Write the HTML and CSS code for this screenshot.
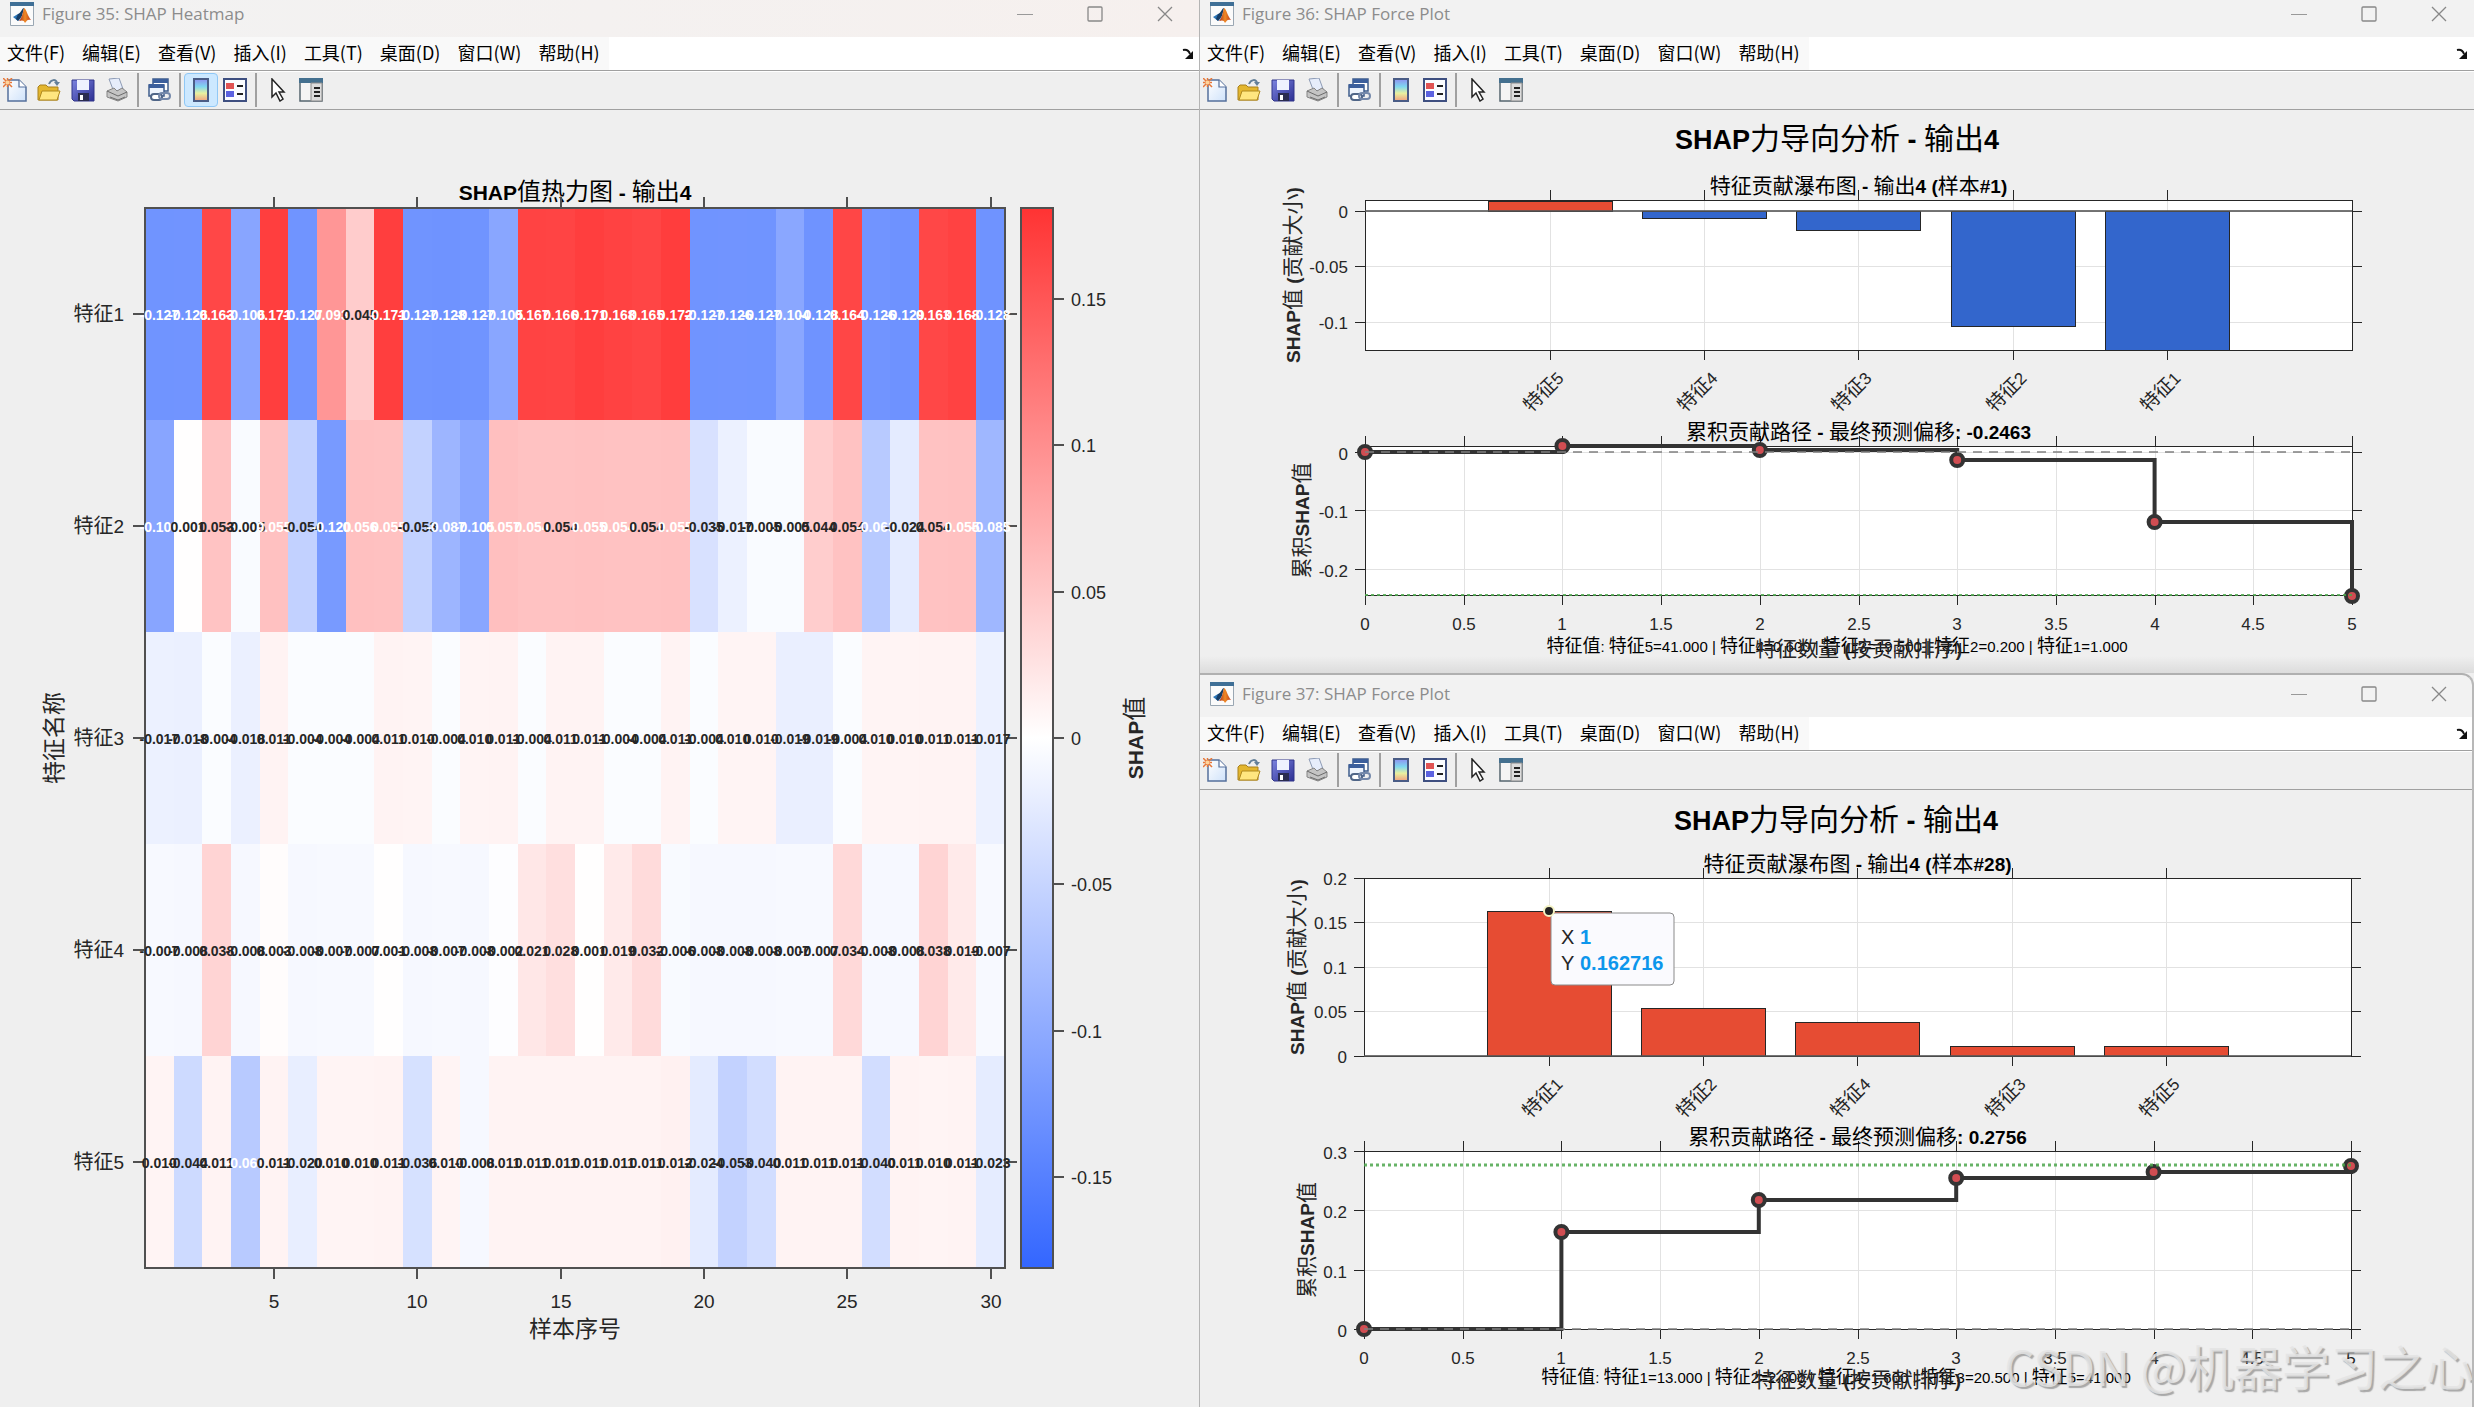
FILE: index.html
```html
<!DOCTYPE html>
<html lang="zh-CN">
<head>
<meta charset="utf-8">
<title>SHAP Figures</title>
<link rel="stylesheet" href="styles.css">
</head>
<body>
<svg class="sprite" aria-hidden="true">
  <defs>
    <linearGradient id="g-bar" x1="0" y1="0" x2="0" y2="1"><stop offset="0" stop-color="#8f8ff0"/><stop offset=".35" stop-color="#7fd8f0"/><stop offset=".65" stop-color="#e8f0a0"/><stop offset="1" stop-color="#f0a080"/></linearGradient>
    <linearGradient id="g-page" x1="0" y1="0" x2="1" y2="1"><stop offset="0" stop-color="#fff"/><stop offset="1" stop-color="#cfe2fa"/></linearGradient>
    <linearGradient id="g-save" x1="0" y1="0" x2="1" y2="1"><stop offset="0" stop-color="#7c84e0"/><stop offset="1" stop-color="#2c2f92"/></linearGradient>
    <linearGradient id="g-flame" x1="0" y1="0" x2="1" y2="0"><stop offset="0" stop-color="#a5281b"/><stop offset=".5" stop-color="#f08a24"/><stop offset="1" stop-color="#c23a1c"/></linearGradient>
  </defs>
  <symbol id="i-matlab" viewBox="0 0 24 24"><path d="M.5 .5h23v23H.5z" fill="#fbfbfb" stroke="#9aa7b3"/><path d="M0 0h24v4H0z" fill="#3f6f96"/><path d="M3 15l5-3 3 4-3 3z" fill="#2a76b8"/><path d="M8 12c3-1 4-6 6-6l-2 8-4 5-2-2z" fill="#163d66"/><path d="M14 6c2 0 4 9 7 12-3-1-4 0-6 3-1-3-3-3-6-2 3-3 4-9 5-13z" fill="url(#g-flame)"/></symbol>
  <symbol id="i-new" viewBox="0 0 24 24"><path d="M5 2h11l7 7v14H5z" fill="url(#g-page)" stroke="#56709c" stroke-width="1.5"/><path d="M16 2v7h7" fill="#fff" stroke="#56709c" stroke-width="1.2"/><path d="M0 0l9 9M9 0L0 9M4.500 0v9M0 4.500h9" stroke="#e87838" stroke-width="1.5"/><circle cx="4.500" cy="4.500" r="2" fill="#ffd39a"/></symbol>
  <symbol id="i-open" viewBox="0 0 24 24"><path d="M1 22V9l2-2h6l2 2h10v13z" fill="#e3b62e" stroke="#a9801c"/><path d="M2 22l3-9h18l-3 9z" fill="#ffe680" stroke="#b08a20"/><path d="M12 6c2-5 7-5 8-1" fill="none" stroke="#64809a" stroke-width="2"/><path d="M17 4h6l-3 4z" fill="#64809a"/></symbol>
  <symbol id="i-save" viewBox="0 0 24 24"><path d="M1 2h22v21H3l-2-2z" fill="url(#g-save)" stroke="#31348a"/><path d="M6 2h12v10H6z" fill="#eef2ff"/><path d="M7 15h11v8H7z" fill="#2a2c50"/><path d="M9 17h3v5H9z" fill="#fff"/></symbol>
  <symbol id="i-print" viewBox="0 0 24 24"><path d="M4 1l10-1 4 11-9 3z" fill="#e6edfb" stroke="#8d9bb5"/><path d="M2 13l7-3 3 3 5-3 5 4v5l-9 4-11-4z" fill="#c4c4c4" stroke="#858585"/><path d="M2 13l11 5 9-4M5 19l8 3 7-3" fill="none" stroke="#6c6c6c"/></symbol>
  <symbol id="i-link" viewBox="0 0 24 24"><path d="M6 1h15v12H6z" fill="#fff" stroke="#3f5d8c" stroke-width="1.500"/><path d="M6 1h15v4H6z" fill="#3c5f9c"/><path d="M2 7h15v11H2z" fill="#edf3fc" stroke="#3f5d8c" stroke-width="1.500"/><path d="M2 6h15v4H2z" fill="#3c5f9c"/><rect x="4" y="16" width="11" height="6" rx="3" fill="#fff" stroke="#4f6587" stroke-width="2"/><rect x="12" y="15" width="11" height="6" rx="3" fill="none" stroke="#7488aa" stroke-width="2"/></symbol>
  <symbol id="i-colorbar" viewBox="0 0 24 24"><path d="M5 1h14v22H5z" fill="url(#g-bar)" stroke="#4a5c86" stroke-width="2"/></symbol>
  <symbol id="i-legend" viewBox="0 0 24 24"><path d="M1 1h22v22H1z" fill="#fafcff" stroke="#3e4f80" stroke-width="2"/><path d="M3 5h8v6H3z" fill="#e05454"/><path d="M3 13h8v6H3z" fill="#5b62e0"/><path d="M14 8h6M14 16h6" stroke="#222" stroke-width="2"/></symbol>
  <symbol id="i-cursor" viewBox="0 0 24 24"><path d="M7 1v18l4-4 4 8 3-2-4-7h5z" fill="#fff" stroke="#222" stroke-width="1.500"/></symbol>
  <symbol id="i-inspect" viewBox="0 0 24 24"><path d="M1 1h22v22H1z" fill="#f4f4f4" stroke="#56656f" stroke-width="1.500"/><path d="M0 0h24v5H0z" fill="#44708f"/><path d="M12 5h11v18H12z" fill="#dcdcdc" stroke="#8a8a8a"/><path d="M15 10h6M15 14h6M15 18h6" stroke="#222" stroke-width="2"/></symbol>
  <symbol id="i-min" viewBox="0 0 16 16"><path d="M0 8.500h16" stroke="#999"/></symbol>
  <symbol id="i-max" viewBox="0 0 16 16"><rect x="1" y="1" width="14" height="14" rx="1" fill="none" stroke="#888" stroke-width="1.300"/></symbol>
  <symbol id="i-close" viewBox="0 0 16 16"><path d="M1 1l14 14M15 1L1 15" stroke="#888" stroke-width="1.300"/></symbol>
  <symbol id="i-dock" viewBox="0 0 12 12"><path d="M1 2c4-1 6 1 7 4" fill="none" stroke="#111" stroke-width="2"/><path d="M11 3v8H3z" fill="#111"/></symbol>
</svg>

<main class="desktop">
  <section class="window window--heatmap" aria-label="Figure 35">
    <header class="titlebar titlebar--warm">
      <svg class="icon"><use href="#i-matlab"/></svg>
      <h1 class="titlebar__text">Figure 35: SHAP Heatmap</h1>
      <div class="controls">
        <button type="button" aria-label="最小化"><svg><use href="#i-min"/></svg></button>
        <button type="button" aria-label="最大化"><svg><use href="#i-max"/></svg></button>
        <button type="button" aria-label="关闭"><svg><use href="#i-close"/></svg></button>
      </div>
    </header>
    <nav class="menubar">
      <div class="menubar__items"><button type="button">文件(F)</button><button type="button">编辑(E)</button><button type="button">查看(V)</button><button type="button">插入(I)</button><button type="button">工具(T)</button><button type="button">桌面(D)</button><button type="button">窗口(W)</button><button type="button">帮助(H)</button></div>
      <button class="dock" type="button" aria-label="停靠"><svg><use href="#i-dock"/></svg></button>
    </nav>
    <div class="toolbar" role="toolbar">
      <div class="group"><button type="button" aria-label="新建"><svg class="icon"><use href="#i-new"/></svg></button><button type="button" aria-label="打开"><svg class="icon"><use href="#i-open"/></svg></button><button type="button" aria-label="保存"><svg class="icon"><use href="#i-save"/></svg></button><button type="button" aria-label="打印"><svg class="icon"><use href="#i-print"/></svg></button></div>
      <div class="group"><button type="button" aria-label="链接"><svg class="icon"><use href="#i-link"/></svg></button></div>
      <div class="group"><button class="is-on" type="button" aria-label="颜色栏" aria-pressed="true"><svg class="icon"><use href="#i-colorbar"/></svg></button><button type="button" aria-label="图例"><svg class="icon"><use href="#i-legend"/></svg></button></div>
      <div class="group group--last"><button type="button" aria-label="编辑绘图"><svg class="icon"><use href="#i-cursor"/></svg></button><button type="button" aria-label="属性"><svg class="icon"><use href="#i-inspect"/></svg></button></div>
    </div>
    <svg class="plot" id="heatmap" viewBox="0 110 1200 1297" role="img" aria-label="SHAP值热力图"></svg>
  </section>

  <div class="column">
    <section class="window" aria-label="Figure 36">
      <header class="titlebar">
        <svg class="icon"><use href="#i-matlab"/></svg>
        <h1 class="titlebar__text">Figure 36: SHAP Force Plot</h1>
        <div class="controls">
          <button type="button" aria-label="最小化"><svg><use href="#i-min"/></svg></button>
          <button type="button" aria-label="最大化"><svg><use href="#i-max"/></svg></button>
          <button type="button" aria-label="关闭"><svg><use href="#i-close"/></svg></button>
        </div>
      </header>
      <nav class="menubar">
        <div class="menubar__items"><button type="button">文件(F)</button><button type="button">编辑(E)</button><button type="button">查看(V)</button><button type="button">插入(I)</button><button type="button">工具(T)</button><button type="button">桌面(D)</button><button type="button">窗口(W)</button><button type="button">帮助(H)</button></div>
        <button class="dock" type="button" aria-label="停靠"><svg><use href="#i-dock"/></svg></button>
      </nav>
      <div class="toolbar" role="toolbar">
        <div class="group"><button type="button" aria-label="新建"><svg class="icon"><use href="#i-new"/></svg></button><button type="button" aria-label="打开"><svg class="icon"><use href="#i-open"/></svg></button><button type="button" aria-label="保存"><svg class="icon"><use href="#i-save"/></svg></button><button type="button" aria-label="打印"><svg class="icon"><use href="#i-print"/></svg></button></div>
        <div class="group"><button type="button" aria-label="链接"><svg class="icon"><use href="#i-link"/></svg></button></div>
        <div class="group"><button type="button" aria-label="颜色栏"><svg class="icon"><use href="#i-colorbar"/></svg></button><button type="button" aria-label="图例"><svg class="icon"><use href="#i-legend"/></svg></button></div>
        <div class="group group--last"><button type="button" aria-label="编辑绘图"><svg class="icon"><use href="#i-cursor"/></svg></button><button type="button" aria-label="属性"><svg class="icon"><use href="#i-inspect"/></svg></button></div>
      </div>
      <svg class="plot plot--shaded" id="force36" viewBox="1200 110 1274 563" role="img" aria-label="SHAP力导向分析 样本1"></svg>
    </section>

    <section class="window window--front" aria-label="Figure 37">
      <header class="titlebar titlebar--tall">
        <svg class="icon"><use href="#i-matlab"/></svg>
        <h1 class="titlebar__text">Figure 37: SHAP Force Plot</h1>
        <div class="controls">
          <button type="button" aria-label="最小化"><svg><use href="#i-min"/></svg></button>
          <button type="button" aria-label="最大化"><svg><use href="#i-max"/></svg></button>
          <button type="button" aria-label="关闭"><svg><use href="#i-close"/></svg></button>
        </div>
      </header>
      <nav class="menubar">
        <div class="menubar__items"><button type="button">文件(F)</button><button type="button">编辑(E)</button><button type="button">查看(V)</button><button type="button">插入(I)</button><button type="button">工具(T)</button><button type="button">桌面(D)</button><button type="button">窗口(W)</button><button type="button">帮助(H)</button></div>
        <button class="dock" type="button" aria-label="停靠"><svg><use href="#i-dock"/></svg></button>
      </nav>
      <div class="toolbar" role="toolbar">
        <div class="group"><button type="button" aria-label="新建"><svg class="icon"><use href="#i-new"/></svg></button><button type="button" aria-label="打开"><svg class="icon"><use href="#i-open"/></svg></button><button type="button" aria-label="保存"><svg class="icon"><use href="#i-save"/></svg></button><button type="button" aria-label="打印"><svg class="icon"><use href="#i-print"/></svg></button></div>
        <div class="group"><button type="button" aria-label="链接"><svg class="icon"><use href="#i-link"/></svg></button></div>
        <div class="group"><button type="button" aria-label="颜色栏"><svg class="icon"><use href="#i-colorbar"/></svg></button><button type="button" aria-label="图例"><svg class="icon"><use href="#i-legend"/></svg></button></div>
        <div class="group group--last"><button type="button" aria-label="编辑绘图"><svg class="icon"><use href="#i-cursor"/></svg></button><button type="button" aria-label="属性"><svg class="icon"><use href="#i-inspect"/></svg></button></div>
      </div>
      <svg class="plot" id="force37" viewBox="1200 790 1274 617" role="img" aria-label="SHAP力导向分析 样本28"></svg>
      <p class="watermark">CSDN @机器学习之心</p>
    </section>
  </div>
</main>
<script src="plots.js"></script>
</body>
</html>
```

FILE: styles.css
```css
* { box-sizing: border-box; }

body {
  margin: 0;
  background: #efefef;
  color: #000;
  font-family: "Noto Sans CJK SC", "Noto Sans", sans-serif;
  font-size: 18px;
}

button {
  border: 0;
  padding: 0;
  background: none;
  font: inherit;
  color: inherit;
}

.sprite { position: absolute; width: 0; height: 0; }

.desktop {
  display: grid;
  grid-template-columns: 1200fr 1274fr;
  overflow: hidden;
}

.column { display: flex; flex-direction: column; min-width: 0; }

.window { position: relative; min-width: 0; background: #efefef; }

/* Window edges lie over the content so that they take no room from the plot */
.window--heatmap::after,
.window--front::after {
  content: "";
  position: absolute;
  inset: 0;
  border-right: 1px solid #b4b4b4;
  pointer-events: none;
}
.window--front { padding-top: 2px; border-radius: 0 12px 0 0; }
.window--front::after {
  border-top: 2px solid #b0b0b0;
  border-right: 2px solid #b8b8b8;
  border-radius: 0 12px 0 0;
}

/* Title bar */
.titlebar {
  display: flex;
  align-items: center;
  height: 37px;
  padding: 0 27px 9px 10px;
  background: #f2f2f2;
}
.titlebar--warm { background: linear-gradient(90deg, #f2f2f2, #f6f0ee); }
.titlebar--tall { height: 42px; padding-bottom: 4px; border-radius: 0 12px 0 0; }
.titlebar__text {
  flex: 1;
  margin: 0 0 0 8px;
  color: #8c8c8c;
  font: 400 17px/24px "Open Sans", "Noto Sans", sans-serif;
}
.controls { display: flex; gap: 54px; }
.controls button { display: flex; }
.controls svg { width: 16px; height: 16px; }
.icon { display: block; width: 24px; height: 24px; }

/* Menu bar */
.menubar {
  display: flex;
  align-items: center;
  justify-content: space-between;
  height: 33px;
  padding-right: 6px;
  background: #fff;
}
.menubar__items {
  display: flex;
  align-items: flex-start;
  gap: 17px;
  height: 33px;
  padding: 0 9px 0 7px;
  background: #f9f9f9;
  line-height: 31px;
}
.dock svg { display: block; width: 12px; height: 12px; }

/* Tool bar */
.toolbar {
  display: flex;
  align-items: center;
  height: 40px;
  border-top: 1px solid #a0a0a0;
  border-bottom: 1px solid #a0a0a0;
  box-shadow: inset 0 1px #fff;
}
.group {
  display: flex;
  align-items: center;
  height: 34px;
  padding: 0 3px;
  border-right: 2px solid #a0a0a0;
}
.group:first-child { padding-left: 0; }
.group--last { border-right: 0; }
.toolbar button { padding: 4px; border: 1px solid transparent; border-radius: 4px; }
.group:first-child button:first-child { padding-left: 2px; }
.toolbar .is-on { border-color: #90c8f6; background: #cce8ff; }

/* Plots */
.plot {
  display: block;
  width: 100%;
  height: auto;
  overflow: hidden;
  font-family: "Liberation Sans", "Noto Sans CJK SC", sans-serif;
}
.plot--shaded { background: linear-gradient(#efefef 97%, #dcdcdc); }
.plot text { fill: #262626; }
.han { font-family: "Noto Sans CJK SC", sans-serif; font-weight: 400; }

.t-cell { font-size: 14px; font-weight: 700; }
.plot .t-cell--light { fill: #fff; }
.t-note { font-size: 15px; }
.t-note .han { font-size: 18px; }
.t-tick { font-size: 17px; }
.t-tick .han { font-size: 19px; }
.t-bar { font-size: 18px; }
.t-axis { font-size: 19px; }
.t-axis .han { font-size: 20px; }
.t-name .han { font-size: 23px; }
.t-label { font-size: 19px; font-weight: 700; }
.t-label .han { font-size: 21px; }
.t-heading { font-size: 21px; font-weight: 700; }
.t-heading .han { font-size: 24px; }
.t-title { font-size: 27px; font-weight: 700; }
.t-title .han { font-size: 30px; }
.plot .t-black { fill: #000; }

.area { fill: #fff; }
.frame { fill: none; stroke: #262626; stroke-width: 1; shape-rendering: crispEdges; }
.tick { stroke: #262626; stroke-width: 1; shape-rendering: crispEdges; }
.heavy .frame, .heavy .tick { stroke: #505050; stroke-width: 2; }
.grid { stroke: #e2e2e2; shape-rendering: crispEdges; }
.cells { shape-rendering: crispEdges; }
.bar { stroke: #262626; stroke-width: 1; shape-rendering: crispEdges; }
.bar--pos { fill: #e64c33; }
.bar--neg { fill: #3366cc; }
.zero { stroke: #555; stroke-width: 2; opacity: .8; shape-rendering: crispEdges; }
.step { fill: none; stroke: #333; stroke-width: 4; }
.dash { stroke: #808080; stroke-width: 2; stroke-dasharray: 9 7; opacity: .75; }
.final { stroke: #4da64d; stroke-width: 3; stroke-dasharray: 3 3; opacity: .85; }
.final--thin { stroke-width: 2; }
.dot { fill: #d14d52; stroke: #333; stroke-width: 4; }

.tip { fill: #fafafe; stroke: #8a8a8a; stroke-width: 1; }
.tip-dot { fill: #222; stroke: #f4f3c4; stroke-width: 2; }
.t-tip { font-size: 20px; }
.plot .t-tip--value { fill: #0d96ec; font-weight: 700; }

.watermark {
  position: absolute;
  right: 0;
  bottom: 14px;
  margin: 0;
  color: rgba(228, 228, 228, .85);
  font-size: 48px;
  line-height: 56px;
  text-shadow: 2px 2px 1px rgba(120, 120, 120, .6);
  white-space: nowrap;
}
```

FILE: plots.js
```javascript
const NS = "http://www.w3.org/2000/svg";

function add(parent, tag, attrs) {
  const node = document.createElementNS(NS, tag);
  for (const key in attrs) node.setAttribute(key, attrs[key]);
  parent.appendChild(node);
  return node;
}

function line(parent, cls, x1, y1, x2, y2) {
  add(parent, "line", { class: cls, x1, y1, x2, y2 });
}

function box(parent, cls, x, y, x2, y2) {
  add(parent, "rect", { class: cls, x, y, width: x2 - x, height: y2 - y });
}

// Chinese runs get their own span so they can use a separate font and size.
function text(parent, cls, x, y, value, anchor = "middle", angle = 0) {
  const node = add(parent, "text", { class: cls, x, y, "text-anchor": anchor });
  if (angle) node.setAttribute("transform", `rotate(${angle} ${x} ${y})`);
  for (const run of value.match(/[\u4e00-\u9fff]+|[^\u4e00-\u9fff]+/g)) {
    if (/[\u4e00-\u9fff]/.test(run)) add(node, "tspan", { class: "han" }).textContent = run;
    else node.appendChild(document.createTextNode(run));
  }
}

/* ---------- Heatmap ---------- */

const shap = [
  [-.127, -.126, .163, -.106, .171, -.127, .093, .045, .171, -.127, -.128, -.127, -.105, .167, .166, .171, .168, .165, .172, -.127, -.126, -.127, -.104, -.128, .164, -.126, -.129, .163, .168, -.128],
  [-.106, .001, .053, -.005, .055, -.054, -.120, .056, .055, -.053, -.087, -.105, .057, .0544, .054, .055, .0544, .054, .055, -.035, -.017, -.005, -.005, .044, .054, -.063, -.024, .054, .055, -.085],
  [-.017, -.018, -.004, -.018, .011, -.004, -.004, -.004, .011, .010, -.004, .010, .011, -.004, .011, .011, -.004, -.004, .011, -.004, .010, .010, -.019, -.019, -.004, .010, .010, .011, .011, -.017],
  [-.007, -.008, .038, -.008, .003, -.008, -.007, -.007, .001, -.008, -.007, -.008, -.002, .021, .028, .001, .019, .032, -.006, -.008, -.008, -.008, -.007, -.007, .034, -.008, -.008, .038, .019, -.007],
  [.010, -.044, .011, -.063, .011, -.020, .010, .010, .011, -.036, .010, -.008, .011, .011, .011, .011, .011, .011, .012, -.024, -.053, -.040, .011, .011, .011, -.040, .011, .010, .011, -.023]
];
const LIMIT = .181;

function color(v) {
  const t = Math.min(1, Math.abs(v) / LIMIT);
  const strong = Math.round(255 - 204 * t);
  return v < 0 ? `rgb(${strong},${Math.round(255 - 153 * t)},255)` : `rgb(255,${strong},${strong})`;
}

function drawHeatmap(root) {
  const svg = add(root, "g", { class: "heavy" });
  const left = 145, right = 1005, top = 208, bottom = 1268;
  const cw = (right - left) / 30, rh = (bottom - top) / 5;
  const cells = add(svg, "g", { class: "cells" });
  shap.forEach((row, r) => row.forEach((v, c) => {
    const x = Math.round(left + c * cw), x2 = Math.round(left + (c + 1) * cw);
    add(cells, "rect", { x, y: top + r * rh, width: x2 - x, height: rh, fill: color(v) });
  }));
  box(svg, "frame", left, top, right, bottom);
  text(svg, "t-heading t-black", 575, 200, "SHAP值热力图 - 输出4");
  for (let k = 5; k <= 30; k += 5) {
    const x = Math.round(left + (k - .5) * cw);
    line(svg, "tick", x, top - 11, x, top);
    line(svg, "tick", x, bottom, x, bottom + 11);
    text(svg, "t-axis", x, 1308, String(k));
  }
  shap.forEach((row, r) => {
    const y = top + (r + .5) * rh;
    line(svg, "tick", left - 12, y, left, y);
    line(svg, "tick", right, y, right + 12, y);
    text(svg, "t-axis", 124, y + 7, "特征" + (r + 1), "end");
    row.forEach((v, c) => {
      const light = Math.abs(v) > .0542 ? " t-cell--light" : "";
      text(svg, "t-cell" + light, left + (c + .5) * cw, y + 6, v.toFixed(3));
    });
  });
  text(svg, "t-name", 575, 1337, "样本序号");
  text(svg, "t-name", 62, 738, "特征名称", "middle", -90);

  const ramp = add(add(svg, "defs", {}), "linearGradient", { id: "ramp", x1: 0, y1: 0, x2: 0, y2: 1 });
  add(ramp, "stop", { offset: 0, "stop-color": "#ff3333" });
  add(ramp, "stop", { offset: .5, "stop-color": "#fff" });
  add(ramp, "stop", { offset: 1, "stop-color": "#3366ff" });
  add(svg, "rect", { x: 1021, y: top, width: 32, height: bottom - top, fill: "url(#ramp)" });
  box(svg, "frame", 1021, top, 1053, bottom);
  for (const v of [.15, .1, .05, 0, -.05, -.1, -.15]) {
    const y = Math.round(738 - v / LIMIT * 530);
    line(svg, "tick", 1053, y, 1064, y);
    text(svg, "t-bar", 1071, y + 7, String(v), "start");
  }
  text(svg, "t-heading", 1143, 738, "SHAP值", "middle", -90);
}

/* ---------- Force plots ---------- */

function drawForce(svg, f) {
  const { left, right } = f;
  const mid = (left + right) / 2, unit = (right - left) / 5;
  text(svg, "t-title t-black", f.title.x, f.title.y, "SHAP力导向分析 - 输出4");

  const b = f.bars;
  box(svg, "area", left, b.top, right, b.bottom);
  const centers = b.values.map((_, i) => Math.round(left + 185 + i * 154.2));
  centers.forEach(x => line(svg, "grid", x, b.top, x, b.bottom));
  b.ticks.forEach(([, y]) => line(svg, "grid", left, y, right, y));
  box(svg, "frame", left, b.top, right, b.bottom);
  b.values.forEach(([name, y], i) => {
    const x = centers[i];
    const cls = y < b.zero ? "bar bar--pos" : "bar bar--neg";
    box(svg, cls, x - 62, Math.min(y, b.zero), x + 62, Math.max(y, b.zero));
    line(svg, "tick", x, b.top - 10, x, b.top);
    line(svg, "tick", x, b.bottom, x, b.bottom + 10);
    text(svg, "t-tick", x - 2, b.bottom + 46, name, "middle", -45);
  });
  b.ticks.forEach(([label, y]) => {
    line(svg, "tick", left - 10, y, left, y);
    line(svg, "tick", right, y, right + 10, y);
    text(svg, "t-tick", left - 17, y + 7, label, "end");
  });
  line(svg, "zero", left, b.zero, right, b.zero);
  text(svg, "t-label t-black", mid, b.top - 7, b.title);
  text(svg, "t-label", b.labelX, (b.top + b.bottom) / 2, "SHAP值 (贡献大小)", "middle", -90);

  const p = f.path;
  box(svg, "area", left, p.top, right, p.bottom);
  for (let k = 0; k <= 10; k++) {
    const x = Math.round(left + k * unit / 2);
    line(svg, "grid", x, p.top, x, p.bottom);
    line(svg, "tick", x, p.top - 10, x, p.top);
    line(svg, "tick", x, p.bottom, x, p.bottom + 10);
    text(svg, "t-tick", x, p.bottom + 35, String(k / 2));
  }
  p.ticks.forEach(([label, y]) => {
    line(svg, "grid", left, y, right, y);
    line(svg, "tick", left - 10, y, left, y);
    line(svg, "tick", right, y, right + 10, y);
    text(svg, "t-tick", left - 17, y + 8, label, "end");
  });
  box(svg, "frame", left, p.top, right, p.bottom);
  let d = `M${left} ${p.points[0]}`;
  p.points.slice(1).forEach((y, i) => { d += `H${left + (i + 1) * unit}V${y}`; });
  add(svg, "path", { class: "step", d });
  p.points.forEach((y, i) => add(svg, "circle", { class: "dot", cx: left + i * unit, cy: y, r: 6 }));
  line(svg, "dash", left, p.points[0], right, p.points[0]);
  line(svg, "final" + (p.final === p.bottom ? " final--thin" : ""), left, p.final, right, p.final);
  text(svg, "t-label t-black", mid, p.top - 7, p.title);
  text(svg, "t-label", p.labelX, (p.top + p.bottom) / 2, "累积SHAP值", "middle", -90);
  text(svg, "t-note t-black", f.note.x, f.note.y, f.note.value);
  text(svg, "t-label", mid, f.note.y + 4, "特征数量 (按贡献排序)");

  if (f.tip) {
    const { x, y } = f.tip;
    add(svg, "rect", { class: "tip", x: x + 2, y: y + 2, width: 123, height: 72, rx: 4 });
    add(svg, "circle", { class: "tip-dot", cx: x, cy: y, r: 5 });
    text(svg, "t-tip", x + 12, y + 33, "X", "start");
    text(svg, "t-tip t-tip--value", x + 31, y + 33, "1", "start");
    text(svg, "t-tip", x + 12, y + 59, "Y", "start");
    text(svg, "t-tip t-tip--value", x + 31, y + 59, "0.162716", "start");
  }
}

drawHeatmap(document.getElementById("heatmap"));

drawForce(document.getElementById("force36"), {
  left: 1365, right: 2352,
  title: { x: 1837, y: 149 },
  bars: {
    top: 200, bottom: 350, zero: 211, labelX: 1300,
    title: "特征贡献瀑布图 - 输出4 (样本#1)",
    ticks: [["0", 211], ["-0.05", 266], ["-0.1", 322]],
    values: [["特征5", 201], ["特征4", 218], ["特征3", 230], ["特征2", 326], ["特征1", 350]]
  },
  path: {
    top: 446, bottom: 595, final: 595, labelX: 1309,
    title: "累积贡献路径 - 最终预测偏移: -0.2463",
    ticks: [["0", 452], ["-0.1", 510], ["-0.2", 569]],
    points: [452, 446, 450, 460, 522, 596]
  },
  note: { x: 1837, y: 652, value: "特征值: 特征5=41.000 | 特征4=0.600 | 特征3=19.500 | 特征2=0.200 | 特征1=1.000" }
});

drawForce(document.getElementById("force37"), {
  left: 1364, right: 2351,
  title: { x: 1836, y: 830 },
  bars: {
    top: 878, bottom: 1056, zero: 1056, labelX: 1304,
    title: "特征贡献瀑布图 - 输出4 (样本#28)",
    ticks: [["0.2", 878], ["0.15", 922], ["0.1", 967], ["0.05", 1011], ["0", 1056]],
    values: [["特征1", 911], ["特征2", 1008], ["特征4", 1022], ["特征3", 1046], ["特征5", 1046]]
  },
  path: {
    top: 1151, bottom: 1329, final: 1165, labelX: 1314,
    title: "累积贡献路径 - 最终预测偏移: 0.2756",
    ticks: [["0.3", 1151], ["0.2", 1210], ["0.1", 1270], ["0", 1329]],
    points: [1329, 1232, 1200, 1178, 1172, 1166]
  },
  note: { x: 1836, y: 1383, value: "特征值: 特征1=13.000 | 特征2=2.800 | 特征4=1.600 | 特征3=20.500 | 特征5=41.000" },
  tip: { x: 1549, y: 911 }
});
```
